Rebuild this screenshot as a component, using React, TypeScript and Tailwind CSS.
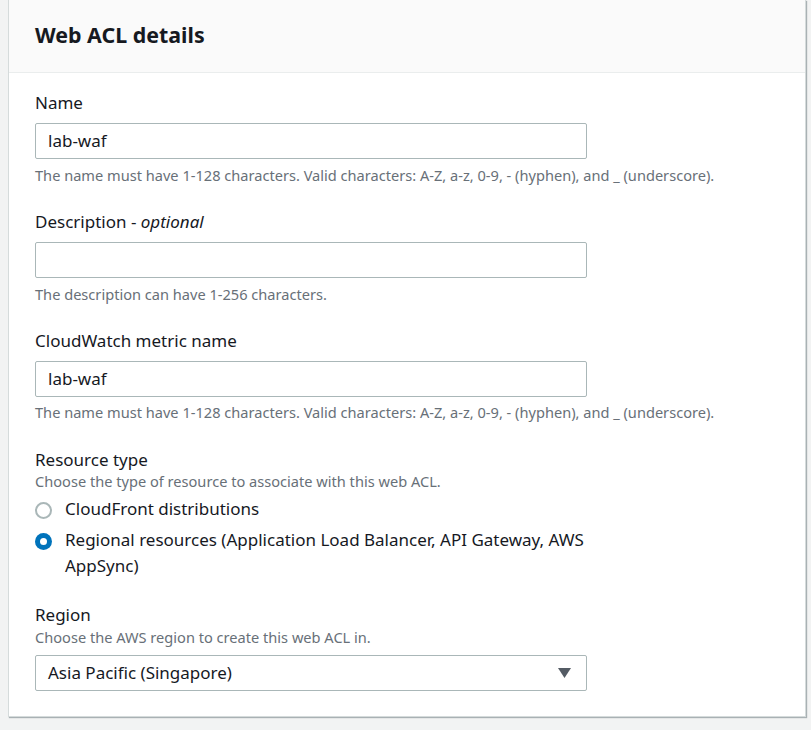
import React from 'react';

const Label: React.FC<{ children: React.ReactNode }> = ({ children }) => (
  <div className="text-[17px] leading-[24px] text-[#16191f]">{children}</div>
);

const Hint: React.FC<{ children: React.ReactNode; className?: string }> = ({ children, className = '' }) => (
  <div className={`text-[14.6px] leading-[20px] text-[#687078] ${className}`}>{children}</div>
);

const TextInput: React.FC<{ value?: string }> = ({ value }) => (
  <div className="mt-[8px] w-[552px] h-[36px] border border-[#aab7b8] rounded-[2px] bg-white flex items-center px-[12px] text-[17px] text-[#16191f]">
    {value}
  </div>
);

const Radio: React.FC<{ checked?: boolean; children: React.ReactNode }> = ({ checked, children }) => (
  <div className="flex items-start gap-[13px]">
    <div className="pt-[6px] shrink-0">
      {checked ? (
        <div className="w-[17px] h-[17px] rounded-full bg-[#0073bb] flex items-center justify-center">
          <div className="w-[7px] h-[7px] rounded-full bg-white" />
        </div>
      ) : (
        <div className="w-[17px] h-[17px] rounded-full border-2 border-[#aab7b8] bg-white" />
      )}
    </div>
    <div className="text-[17px] leading-[26px] text-[#16191f] w-[560px]">{children}</div>
  </div>
);

export default function App() {
  const nameHint = 'The name must have 1-128 characters. Valid characters: A-Z, a-z, 0-9, - (hyphen), and _ (underscore).';
  return (
    <div className="min-h-[730px] bg-[#f2f3f3] px-[8px] pb-[14px]" style={{ fontFamily: '"Noto Sans", "Open Sans", sans-serif' }}>
      <div className="w-[798px] bg-white border-x border-b border-[#d5dbdb] shadow-[1px_1px_1px_0_rgba(0,28,36,0.3)]">
        {/* Header */}
        <div className="bg-[#fafafa] border-b border-[#eaeded] px-[26px] pt-[20px] pb-[22px]">
          <h2 className="text-[21.4px] font-bold text-[#16191f] leading-[30px]">Web ACL details</h2>
        </div>

        {/* Body */}
        <div className="px-[26px] pt-[18px] pb-[25px]">
          <div>
            <Label>Name</Label>
            <TextInput value="lab-waf" />
            <Hint className="mt-[6px]">{nameHint}</Hint>
          </div>

          <div className="mt-[25px]">
            <Label>Description - <i>optional</i></Label>
            <TextInput />
            <Hint className="mt-[6px]">The description can have 1-256 characters.</Hint>
          </div>

          <div className="mt-[25px]">
            <Label>CloudWatch metric name</Label>
            <TextInput value="lab-waf" />
            <Hint className="mt-[5px]">{nameHint}</Hint>
          </div>

          <div className="mt-[26px]">
            <Label>Resource type</Label>
            <Hint className="-mt-[1px]">Choose the type of resource to associate with this web ACL.</Hint>
            <div className="mt-[5px] flex flex-col gap-[5px]">
              <Radio>CloudFront distributions</Radio>
              <Radio checked>Regional resources (Application Load Balancer, API Gateway, AWS AppSync)</Radio>
            </div>
          </div>

          <div className="mt-[24px]">
            <Label>Region</Label>
            <Hint>Choose the AWS region to create this web ACL in.</Hint>
            <div className="mt-[8px] w-[552px] h-[36px] border border-[#aab7b8] rounded-[2px] bg-white flex items-center justify-between pl-[12px] pr-[15px] text-[17px] text-[#16191f]">
              <span>Asia Pacific (Singapore)</span>
              <svg width="13" height="10" viewBox="0 0 13 10"><path d="M0 0h13L6.5 10z" fill="#545b64" /></svg>
            </div>
          </div>
        </div>
      </div>
    </div>
  );
}
